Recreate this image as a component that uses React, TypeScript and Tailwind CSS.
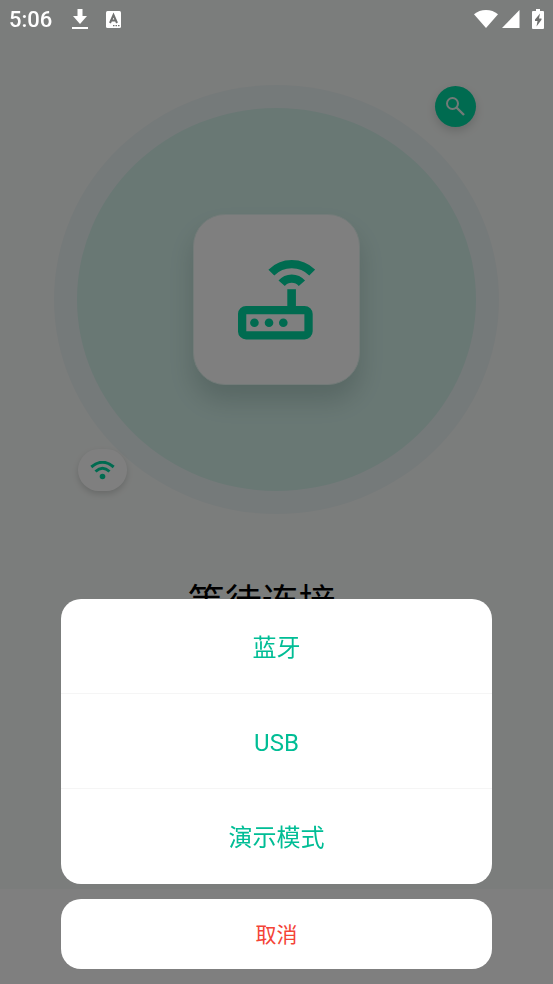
import React, { useState } from 'react';

const sheetOptions = ['蓝牙', 'USB', '演示模式'];

const RouterIcon = () => (
  <svg viewBox="0 0 231 241" className="w-[77px] h-20" fill="none" stroke="#00d6a1" strokeWidth="25" aria-hidden="true">
    <path d="M100 38A87 87 0 0 1 223 38" />
    <path d="M131 70A40 40 0 0 1 192 70" />
    <path d="M161 88V145" strokeWidth="26" />
    <rect x="12" y="151" width="200" height="76" rx="12" />
    <g fill="#00d6a1" stroke="none">
      <circle cx="49" cy="189" r="13" />
      <circle cx="93" cy="189" r="13" />
      <circle cx="136" cy="189" r="13" />
    </g>
  </svg>
);

const StatusBar = () => (
  <header className="relative z-20 flex items-center justify-between h-[38px] px-[9px] text-white">
    <div className="flex items-center">
      <span className="pt-px text-[22px] leading-[38px] font-medium">5:06</span>
      <svg viewBox="0 0 16 20" className="ml-5 w-4 h-5" fill="currentColor" aria-hidden="true">
        <path d="M5.5 0h5v7H15l-7 8-7-8h4.5zM0 18h16v2H0z" />
      </svg>
      <svg viewBox="0 0 15 17" className="ml-[18px] w-[15px] h-[17px]" aria-hidden="true">
        <rect width="15" height="17" rx="1.5" fill="currentColor" />
        <path d="M4 12L7.5 4 11 12M5.2 9.6h4.6" fill="none" stroke="#6f706f" strokeWidth="2" />
        <path d="M7 14h1.5v1.2H7zM9.5 14H11v1.2H9.5zM12 14h1.5v1.2H12z" fill="#6f706f" />
      </svg>
    </div>
    <div className="flex items-center">
      <svg viewBox="0 0 24 18" className="w-6 h-[18px]" fill="currentColor" aria-hidden="true">
        <path d="M0 4.3C3.3 1.5 7.5 0 12 0s8.700 1.500 12 4.300L12 18z" />
      </svg>
      <svg viewBox="0 0 18 18" className="ml-1 w-[18px] h-[18px]" fill="currentColor" aria-hidden="true">
        <path d="M17.5 0v18H0z" />
      </svg>
      <svg viewBox="0 0 12 20" className="ml-3 w-3 h-5" aria-hidden="true">
        <path d="M4 0h4v2h3q1 0 1 1v16q0 1-1 1H1q-1 0-1-1V3q0-1 1-1h3z" fill="currentColor" />
        <path d="M8 4.5L3 10.500v1.500h2.500L4.500 17.500 9.500 10.800V9.500H7z" fill="#6f706f" />
      </svg>
    </div>
  </header>
);

const App = () => {
  const [isSheetOpen, setIsSheetOpen] = useState(true);
  const closeSheet = () => setIsSheetOpen(false);

  return (
    <div className="min-h-screen flex flex-col bg-[#f7faf8] font-['Roboto','Noto_Sans_CJK_SC',sans-serif]">
      <StatusBar />

      <main className="flex-1 flex flex-col pt-[47px]">
        {/* Halo around the device card */}
        <div className="relative mx-[54px] p-[23px] rounded-[50%] bg-[#ebf4f4]">
          <div className="flex items-center justify-center h-[383px] rounded-[50%] bg-[#d2f0e9]">
            <div className="flex items-center justify-center w-[167px] h-[171px] rounded-[32px] border border-[#e6f6f2] bg-white shadow-[0_16px_24px_rgba(0,40,30,0.16)]">
              <RouterIcon />
            </div>
          </div>

          <button
            type="button"
            aria-label="搜索"
            onClick={() => setIsSheetOpen(true)}
            className="absolute top-px right-[23px] flex items-center justify-center w-[41px] h-[41px] rounded-full bg-[#00d6a1] shadow-[0_4px_10px_rgba(0,0,0,0.15)]"
          >
            <svg viewBox="0 0 19 19" className="w-[19px] h-[19px]" fill="none" stroke="#e4f4ee" strokeWidth="2" aria-hidden="true">
              <circle cx="6.5" cy="6.5" r="5.5" />
              <path d="M10.5 10.5L18 18" strokeWidth="2.4" />
            </svg>
          </button>

          <div className="absolute bottom-[23px] left-6 flex items-center justify-center w-[49px] h-[42px] rounded-full bg-white shadow-[0_3px_6px_rgba(0,0,0,0.15)]">
            <svg viewBox="0 0 25 19" className="w-[25px] h-[19px]" fill="none" stroke="#00d6a1" strokeWidth="3" aria-hidden="true">
              <path d="M1.3 6Q12.5-3.500 23.700 6M5.500 10.500Q12.500 4 19.500 10.500" />
              <circle cx="12.5" cy="15.5" r="2.800" fill="#00d6a1" stroke="none" />
            </svg>
          </div>
        </div>

        <h1 className="mt-[69px] text-center text-[37px] leading-[42px] text-black">等待连接...</h1>
      </main>

      <footer className="h-[95px] bg-white" />

      {isSheetOpen && (
        <div className="fixed inset-0 z-10 flex flex-col items-center justify-end pb-[15px] bg-black/50" onClick={closeSheet}>
          <div role="dialog" aria-label="等待连接" className="w-7/9 flex flex-col gap-[15px]">
            <div className="overflow-hidden rounded-[20px] bg-white divide-y divide-[#f5f5f5]">
              {sheetOptions.map((option) => (
                <button
                  key={option}
                  type="button"
                  onClick={closeSheet}
                  className="block w-full h-[95px] pt-[3px] text-2xl text-[#00bd95]"
                >
                  {option}
                </button>
              ))}
            </div>
            <button type="button" onClick={closeSheet} className="h-[70px] pt-[3px] rounded-[20px] bg-white text-[21px] text-[#f44336]">
              取消
            </button>
          </div>
        </div>
      )}
    </div>
  );
};

export default App;
